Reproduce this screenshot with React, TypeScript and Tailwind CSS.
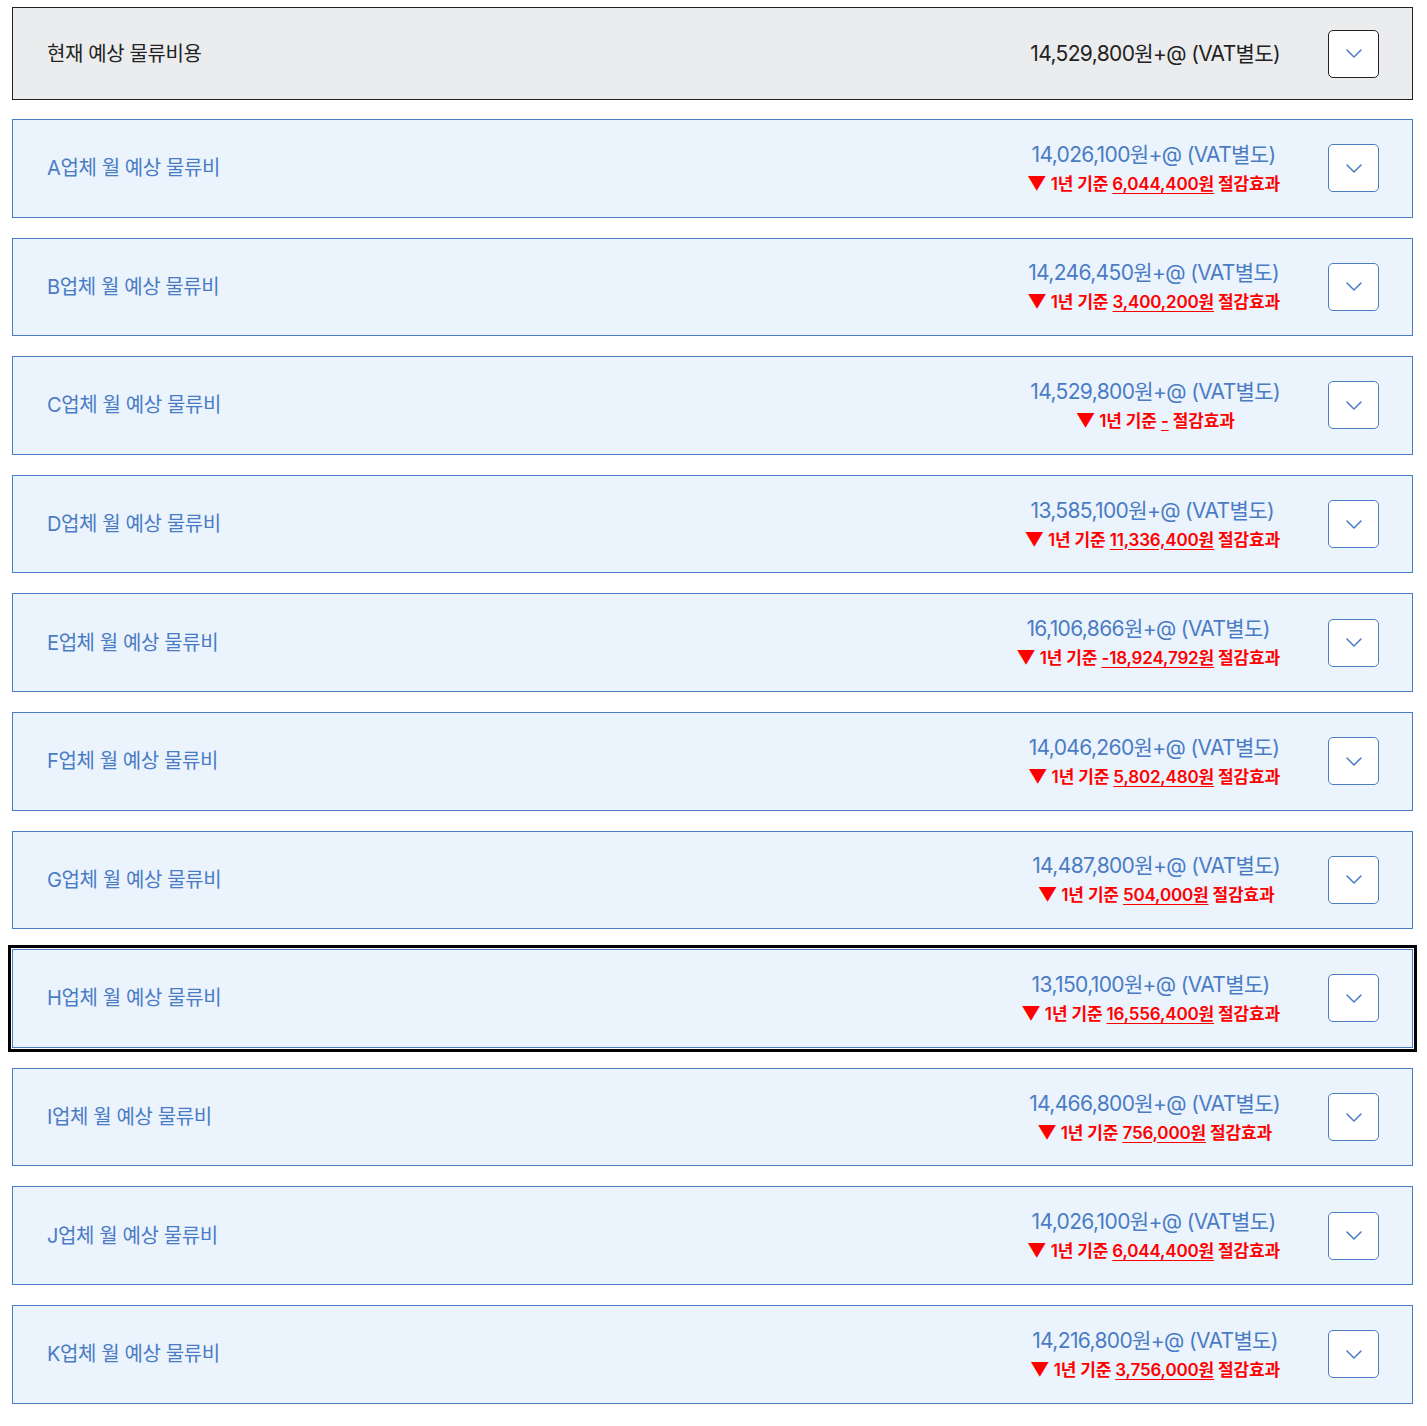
const rows = [
  { name: "A", price: "14,026,100", save: "6,044,400원" },
  { name: "B", price: "14,246,450", save: "3,400,200원" },
  { name: "C", price: "14,529,800", save: "-" },
  { name: "D", price: "13,585,100", save: "11,336,400원" },
  { name: "E", price: "16,106,866", save: "-18,924,792원" },
  { name: "F", price: "14,046,260", save: "5,802,480원" },
  { name: "G", price: "14,487,800", save: "504,000원" },
  { name: "H", price: "13,150,100", save: "16,556,400원", focused: true },
  { name: "I", price: "14,466,800", save: "756,000원" },
  { name: "J", price: "14,026,100", save: "6,044,400원" },
  { name: "K", price: "14,216,800", save: "3,756,000원" },
];

function Chevron({ dark }: { dark?: boolean }) {
  return (
    <button
      className={
        "w-[51px] h-[48px] shrink-0 rounded-[5px] bg-white flex items-center justify-center border " +
        (dark ? "border-[#222]" : "border-[#4a7cc4]")
      }
    >
      <svg width="16" height="9" viewBox="0 0 16 9" fill="none">
        <path d="M1 1l7 7 7-7" stroke="#4a7cc4" strokeWidth="1.5" strokeLinecap="round" strokeLinejoin="round" />
      </svg>
    </button>
  );
}

export default function App() {
  return (
    <div
      className="bg-white min-h-[1426px] pt-[7px] pl-3"
      style={{ fontFamily: '"Inter", "Noto Sans CJK KR", sans-serif' }}
    >
      <div className="w-[1401px] flex flex-col gap-5">
        {/* current cost */}
        <div className="h-[93px] -mb-px bg-[#ebecee] border border-[#222] flex items-center pl-[34px] pr-[33px]">
          <div className="flex-1 text-[20px] text-[#222] tracking-[-0.02em]">현재 예상 물류비용</div>
          <div className="text-[21px] text-[#222] tracking-[-0.03em] mr-[48px]">14,529,800원+@ (VAT별도)</div>
          <Chevron dark />
        </div>

        {rows.map((r) => (
          <div
            key={r.name}
            className={
              "h-[98.6px] bg-[#ebf3fd] border border-[#4a7cc4] flex items-center pl-[34px] pr-[33px] " +
              (r.focused ? "outline-[3px] outline-solid outline-black outline-offset-[1px]" : "")
            }
          >
            <div className="flex-1 text-[20px] text-[#4a7cc4] tracking-[-0.02em]">{r.name}업체 월 예상 물류비</div>
            <div className="mr-[48px] text-center">
              <div className="text-[21px] leading-[28px] text-[#4a7cc4] tracking-[-0.03em]">
                {r.price}원+@ (VAT별도)
              </div>
              <div className="mt-[3px] text-[17px] leading-[24px] font-semibold text-[#ff0000] tracking-[-0.01em]">
                <span className="text-[19px]">▼</span> 1년 기준{" "}
                <span className="underline underline-offset-[3px]">{r.save}</span> 절감효과
              </div>
            </div>
            <Chevron />
          </div>
        ))}
      </div>
    </div>
  );
}
